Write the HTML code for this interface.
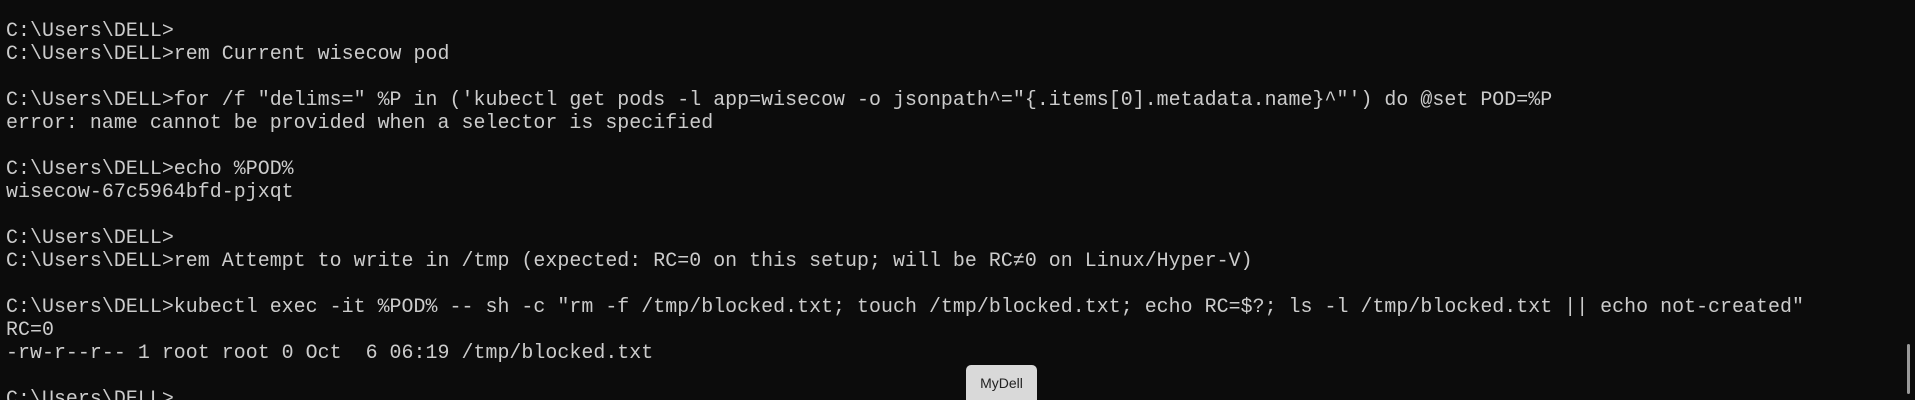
<!DOCTYPE html>
<html><head><meta charset="utf-8"><style>
html,body{margin:0;padding:0;background:#0c0c0c;width:1915px;height:400px;overflow:hidden;position:relative}
pre{position:absolute;left:6px;top:19px;margin:0;font-family:"Liberation Mono",monospace;font-size:19.9px;letter-spacing:0.05px;line-height:23px;color:#cccccc;white-space:pre}
.tip{position:absolute;left:966px;top:365px;width:71px;height:40px;background:#d9d9d9;border-radius:5px;font-family:"Liberation Sans",sans-serif;font-size:14px;color:#222;text-align:center;line-height:36px}
.sb{position:absolute;left:1907px;top:344px;width:3px;height:50px;background:#9a9a9a;border-radius:2px}
</style></head><body>
<pre>C:\Users\DELL&gt;
C:\Users\DELL&gt;rem Current wisecow pod

C:\Users\DELL&gt;for /f "delims=" %P in ('kubectl get pods -l app=wisecow -o jsonpath^="{.items[0].metadata.name}^"') do @set POD=%P
error: name cannot be provided when a selector is specified

C:\Users\DELL&gt;echo %POD%
wisecow-67c5964bfd-pjxqt

C:\Users\DELL&gt;
C:\Users\DELL&gt;rem Attempt to write in /tmp (expected: RC=0 on this setup; will be RC≠0 on Linux/Hyper-V)

C:\Users\DELL&gt;kubectl exec -it %POD% -- sh -c "rm -f /tmp/blocked.txt; touch /tmp/blocked.txt; echo RC=$?; ls -l /tmp/blocked.txt || echo not-created"
RC=0
-rw-r--r-- 1 root root 0 Oct  6 06:19 /tmp/blocked.txt

C:\Users\DELL&gt;</pre>
<div class="tip">MyDell</div>
<div class="sb"></div>
</body></html>
